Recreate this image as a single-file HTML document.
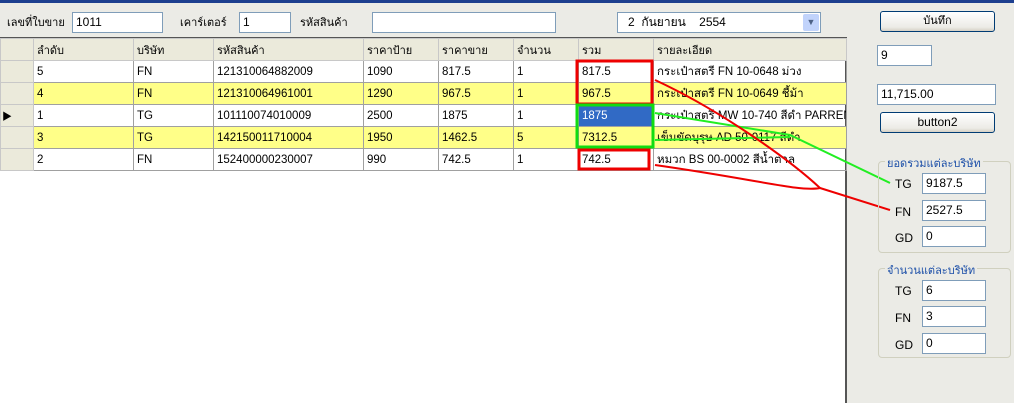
<!DOCTYPE html>
<html><head><meta charset="utf-8"><style>
*{box-sizing:border-box;margin:0;padding:0}
body{width:1014px;height:403px;background:#ebebe6;font-family:"Liberation Sans","Noto Sans CJK SC",sans-serif;font-size:12px;position:relative;overflow:hidden;color:#000}
.a{position:absolute}
.tb{position:absolute;background:#fff;border:1px solid #7f9db9;padding:2px 3px;font-size:12px;height:21px;line-height:15px}
.btn{position:absolute;border:1px solid #003c74;border-radius:3px;background:linear-gradient(#fff,#ecebe6 80%,#d6d0c5);text-align:center;line-height:19px;font-size:12px}
.grp{position:absolute;border:1px solid #d0d0bf;border-radius:4px}
.gt{position:absolute;top:-8px;left:6px;background:#ebebe6;color:#1c4fa8;padding:0 2px;font-size:11px}
table{border-collapse:collapse;position:absolute;left:0;top:38px;table-layout:fixed;width:846px}
td{height:22px;border:1px solid #a0a0a0;padding:0 3px;font-size:11.5px;white-space:nowrap;overflow:hidden}
tr.h td{background:#ebeadb;border-color:#c8c8c8;font-size:11px}
tr.y td{background:#ffff88}
td.rh{background:#ebeadb;border-color:#c8c8c8}
</style></head><body>
<div class="a" style="left:0;top:0;width:1014px;height:3px;background:#1d3f8f"></div>
<div class="a" style="left:7px;top:13px;font-size:11px">เลขที่ใบขาย</div>
<div class="tb" style="left:72px;top:12px;width:91px">1011</div>
<div class="a" style="left:180px;top:13px;font-size:11px">เคาร์เตอร์</div>
<div class="tb" style="left:239px;top:12px;width:52px">1</div>
<div class="a" style="left:300px;top:13px;font-size:11px">รหัสสินค้า</div>
<div class="tb" style="left:372px;top:12px;width:184px"></div>
<div class="tb" style="left:617px;top:12px;width:204px;padding-left:10px">2 &nbsp;กันยายน &nbsp;&nbsp;&nbsp;2554</div>
<div class="a" style="left:803px;top:14px;width:16px;height:17px;background:#c1d3fb;border-radius:2px;color:#4d6185;font-size:9px;text-align:center;line-height:17px">&#9660;</div>
<div class="a" style="left:0;top:38px;width:847px;height:365px;background:#fff;border-right:2px solid #555"></div>
<div class="a" style="left:0;top:37px;width:847px;height:1px;background:#555"></div>
<table>
<colgroup><col style="width:33px"><col style="width:100px"><col style="width:80px"><col style="width:150px"><col style="width:75px"><col style="width:75px"><col style="width:65px"><col style="width:75px"><col style="width:193px"></colgroup>
<tr class="h"><td class="rh"></td><td>ลำดับ</td><td>บริษัท</td><td>รหัสสินค้า</td><td>ราคาป้าย</td><td>ราคาขาย</td><td>จำนวน</td><td>รวม</td><td>รายละเอียด</td></tr>
<tr><td class="rh"></td><td>5</td><td>FN</td><td>121310064882009</td><td>1090</td><td>817.5</td><td>1</td><td>817.5</td><td>กระเป๋าสตรี FN 10-0648 ม่วง</td></tr>
<tr class="y"><td class="rh" style="background:#ebeadb"></td><td>4</td><td>FN</td><td>121310064961001</td><td>1290</td><td>967.5</td><td>1</td><td>967.5</td><td>กระเป๋าสตรี FN 10-0649 ชี้ม้า</td></tr>
<tr><td class="rh" style="font-size:10px;padding:0 1px">&#9654;</td><td>1</td><td>TG</td><td>101110074010009</td><td>2500</td><td>1875</td><td>1</td><td style="background:#316ac5;color:#fff">1875</td><td>กระเป๋าสตรี MW 10-740 สีดำ PARRENO</td></tr>
<tr class="y"><td class="rh" style="background:#ebeadb"></td><td>3</td><td>TG</td><td>142150011710004</td><td>1950</td><td>1462.5</td><td>5</td><td>7312.5</td><td>เข็มขัดบุรุษ AD 50-0117 สีดำ</td></tr>
<tr><td class="rh"></td><td>2</td><td>FN</td><td>152400000230007</td><td>990</td><td>742.5</td><td>1</td><td>742.5</td><td>หมวก BS 00-0002 สีน้ำตาล</td></tr>
</table>
<svg class="a" style="left:0;top:0" width="1014" height="403">
<rect x="577" y="61" width="75" height="43" fill="none" stroke="#e00" stroke-width="3"/>
<rect x="577" y="105" width="76" height="42" fill="none" stroke="#1d1" stroke-width="3"/>
<rect x="579" y="150" width="70" height="19" fill="none" stroke="#e00" stroke-width="3"/>
<polyline points="655,113 790,135 890,183" fill="none" stroke="#2e2" stroke-width="2"/>
<polyline points="655,140 790,137" fill="none" stroke="#2e2" stroke-width="2"/>
<path d="M655,80 C720,110 790,160 820,188 C800,192 760,180 655,165" fill="none" stroke="#e00" stroke-width="2"/>
<polyline points="820,188 890,210" fill="none" stroke="#e00" stroke-width="2"/>
</svg>
<div class="btn" style="left:880px;top:11px;width:115px;height:21px;font-size:11px">บันทึก</div>
<div class="tb" style="left:877px;top:45px;width:55px">9</div>
<div class="tb" style="left:877px;top:84px;width:119px">11,715.00</div>
<div class="btn" style="left:880px;top:112px;width:115px;height:21px">button2</div>
<div class="grp" style="left:878px;top:161px;width:133px;height:92px"><div class="gt">ยอดรวมแต่ละบริษัท</div></div>
<div class="a" style="left:895px;top:177px">TG</div><div class="tb" style="left:922px;top:173px;width:64px">9187.5</div>
<div class="a" style="left:895px;top:205px">FN</div><div class="tb" style="left:922px;top:200px;width:64px">2527.5</div>
<div class="a" style="left:895px;top:231px">GD</div><div class="tb" style="left:922px;top:226px;width:64px">0</div>
<div class="grp" style="left:878px;top:268px;width:133px;height:90px"><div class="gt">จำนวนแต่ละบริษัท</div></div>
<div class="a" style="left:895px;top:284px">TG</div><div class="tb" style="left:922px;top:280px;width:64px">6</div>
<div class="a" style="left:895px;top:311px">FN</div><div class="tb" style="left:922px;top:306px;width:64px">3</div>
<div class="a" style="left:895px;top:338px">GD</div><div class="tb" style="left:922px;top:333px;width:64px">0</div>
</body></html>
